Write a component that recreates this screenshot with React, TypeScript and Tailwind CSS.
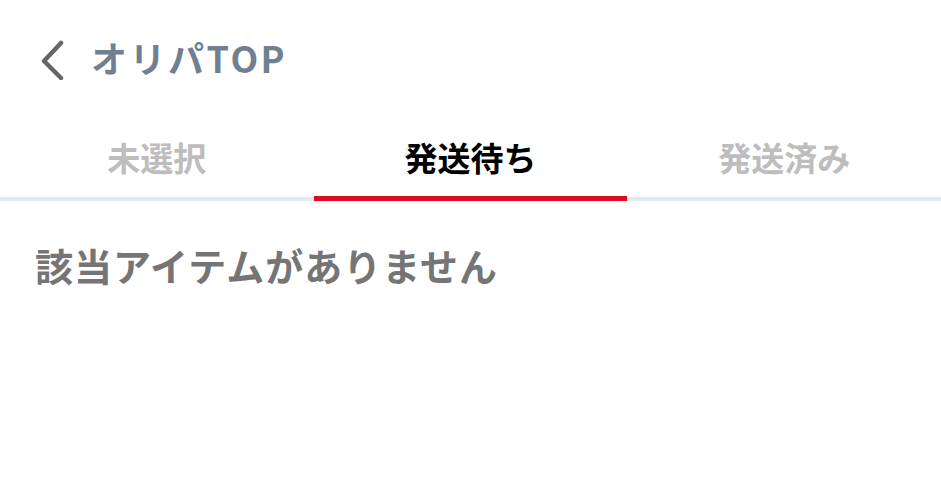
const jp = { fontFamily: '"Noto Sans CJK JP", "Noto Sans", sans-serif' }

function Tab({ label, active }: { label: string; active?: boolean }) {
  return (
    <div className="flex-1 flex flex-col items-center">
      <div
        className={
          'h-[78px] flex items-center justify-center text-[33px] font-bold leading-none ' +
          (active ? 'text-black' : 'text-[#bdbdbd]')
        }
      >
        {label}
      </div>
      <div className={'relative z-10 h-[5px] w-full ' + (active ? 'bg-[#dc0a23]' : 'bg-transparent')} />
    </div>
  )
}

export default function App() {
  return (
    <div className="w-[941px] h-[500px] bg-white" style={jp}>
      <div className="flex items-center h-[100px] pt-[20px] pl-[40px] gap-[25px]">
        <svg width="26" height="40" viewBox="0 0 26 40" fill="none">
          <path d="M21 3 L4 21 L21 38" stroke="#666" strokeWidth="4.5" strokeLinecap="round" strokeLinejoin="round" />
        </svg>
        <div className="text-[36px] font-bold text-[#708090] leading-none tracking-[2.5px] -mt-[6px]">オリパTOP</div>
      </div>
      <div className="relative flex pt-[18px]">
        <div className="absolute left-0 right-0 bottom-0 h-[4px] bg-[#e2e8f0]" />
        <Tab label="未選択" />
        <Tab label="発送待ち" active />
        <Tab label="発送済み" />
      </div>
      <div className="px-[35px] pt-[45px] text-[38px] font-bold text-[#757575] leading-none tracking-[1px]">
        該当アイテムがありません
      </div>
    </div>
  )
}
